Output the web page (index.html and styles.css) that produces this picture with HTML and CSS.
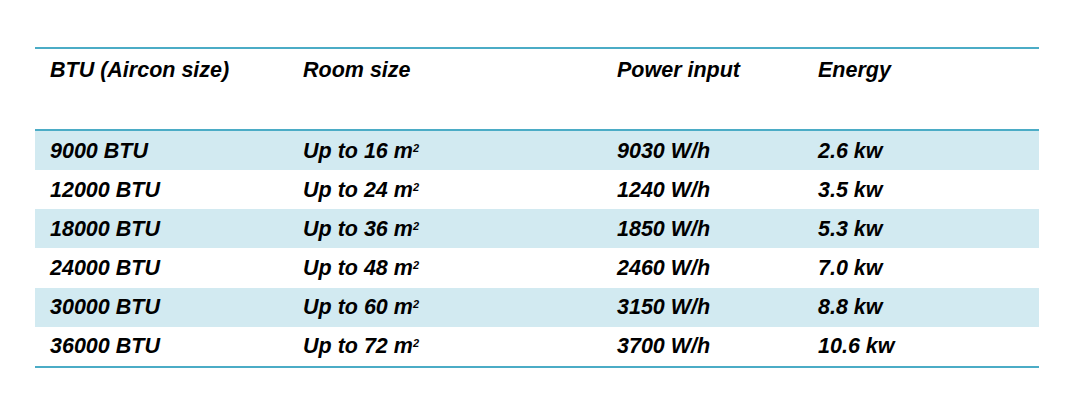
FILE: index.html
```html
<!DOCTYPE html>
<html>
<head>
<meta charset="utf-8">
<link rel="stylesheet" href="styles.css">
</head>
<body>
<div class="table">
  <div class="row head">
    <div class="cell c1">BTU (Aircon size)</div>
    <div class="cell c2">Room size</div>
    <div class="cell c3">Power input</div>
    <div class="cell c4">Energy</div>
  </div>
  <div class="row band">
    <div class="cell c1">9000 BTU</div>
    <div class="cell c2">Up to 16 m<span class="sup">2</span></div>
    <div class="cell c3">9030 W/h</div>
    <div class="cell c4">2.6 kw</div>
  </div>
  <div class="row">
    <div class="cell c1">12000 BTU</div>
    <div class="cell c2">Up to 24 m<span class="sup">2</span></div>
    <div class="cell c3">1240 W/h</div>
    <div class="cell c4">3.5 kw</div>
  </div>
  <div class="row band">
    <div class="cell c1">18000 BTU</div>
    <div class="cell c2">Up to 36 m<span class="sup">2</span></div>
    <div class="cell c3">1850 W/h</div>
    <div class="cell c4">5.3 kw</div>
  </div>
  <div class="row">
    <div class="cell c1">24000 BTU</div>
    <div class="cell c2">Up to 48 m<span class="sup">2</span></div>
    <div class="cell c3">2460 W/h</div>
    <div class="cell c4">7.0 kw</div>
  </div>
  <div class="row band">
    <div class="cell c1">30000 BTU</div>
    <div class="cell c2">Up to 60 m<span class="sup">2</span></div>
    <div class="cell c3">3150 W/h</div>
    <div class="cell c4">8.8 kw</div>
  </div>
  <div class="row">
    <div class="cell c1">36000 BTU</div>
    <div class="cell c2">Up to 72 m<span class="sup">2</span></div>
    <div class="cell c3">3700 W/h</div>
    <div class="cell c4">10.6 kw</div>
  </div>
</div>
</body>
</html>
```
FILE: styles.css
```css
html, body {
  margin: 0;
  padding: 0;
  background: #ffffff;
}
body {
  padding: 47px 0 0 35px;
  font-family: "Liberation Sans", Arial, sans-serif;
  font-weight: bold;
  font-style: italic;
  font-size: 21.5px;
  color: #000000;
}
.table {
  width: 1004px;
  border-top: 2px solid #4bacc6;
  border-bottom: 2px solid #4bacc6;
}
.row {
  display: grid;
  grid-template-columns: 253px 314px 201px 236px;
  height: 39.17px;
  align-items: center;
}
.row.head {
  height: 80px;
  align-items: start;
  border-bottom: 2px solid #4bacc6;
}
.row.head .cell {
  padding-top: 9px;
}
.band {
  background: #d2eaf1;
}
.cell {
  padding-left: 15px;
  white-space: nowrap;
  line-height: 24px;
}
.sup {
  font-size: 11px;
  vertical-align: 6px;
  line-height: 0;
}
```
